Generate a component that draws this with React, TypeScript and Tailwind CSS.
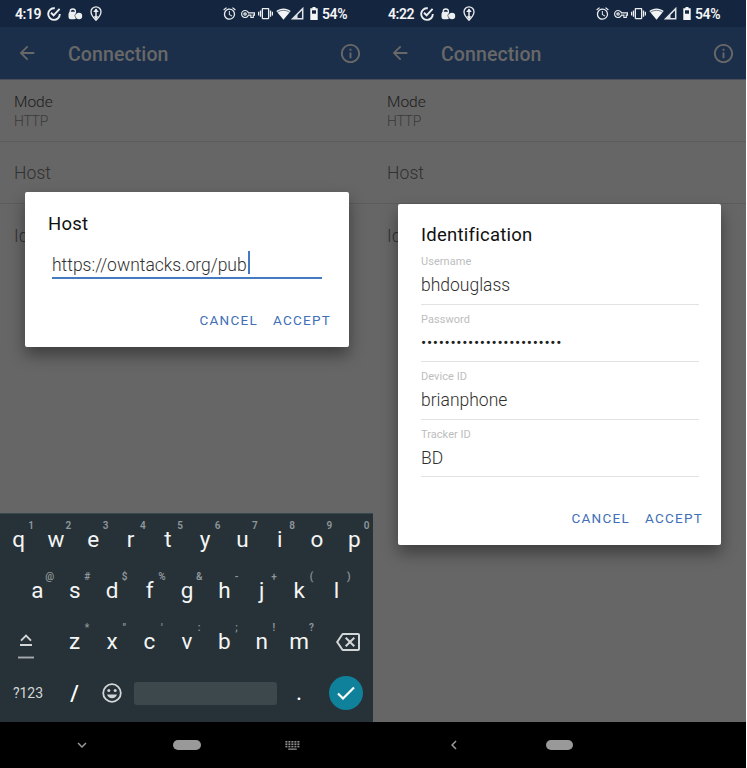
import React from "react";
import { MdArrowBack, MdAlarm, MdOutlineVpnKey, MdVibration, MdInfoOutline, MdOutlineBackspace, MdKeyboardArrowDown, MdKeyboardArrowLeft } from "react-icons/md";

function TaskIcon() {
  return (
    <svg width="14" height="14" viewBox="0 0 14 14" fill="none" stroke="#eceef0" strokeWidth="1.9">
      <path d="M7.8 1.3A5.8 5.8 0 1 0 12.8 7" />
      <path d="M4 5.800 6.600 8.300 12.600 1.800" />
    </svg>
  );
}

function LockBubblesIcon() {
  return (
    <svg width="15" height="12" viewBox="0 0 15 12">
      <path d="M2.200 5V3.600a2.600 2.600 0 0 1 5.200 0V5" fill="none" stroke="#eceef0" strokeWidth="1.300" />
      <rect x="0.500" y="3.700" width="7.800" height="7.600" rx="2.200" fill="#eceef0" />
      <circle cx="11" cy="8" r="3.200" fill="#eceef0" />
      <path d="M8.300 4.800a4 4 0 0 0-.4 5.500" fill="none" stroke="#14263f" strokeWidth="0.600" />
    </svg>
  );
}

function PinIcon() {
  return (
    <svg width="12" height="15" viewBox="0 0 12 15">
      <path d="M6 .8a5 5 0 0 0-5 5C1 9.300 6 14.300 6 14.300s5-5 5-8.500a5 5 0 0 0-5-5Z" fill="none" stroke="#eceef0" strokeWidth="1.300" />
      <path d="M6 3.200v8" fill="none" stroke="#eceef0" strokeWidth="1.500" />
      <path d="M6 2.600 8.800 6H3.200zM3.800 10.300h4.400L6 13.800z" fill="#eceef0" />
    </svg>
  );
}

function WifiIcon() {
  return (
    <svg width="15" height="12" viewBox="0 0 15 12">
      <path d="M.3 3C4.300-.5 10.700-.5 14.700 3L7.500 11.800Z" fill="#f4f5f6" />
      <path d="M1.300 4.300C5 1.700 10 1.700 13.700 4.300" fill="none" stroke="#14263f" strokeWidth="0.600" />
    </svg>
  );
}

function SignalIcon() {
  return (
    <svg width="13" height="13" viewBox="0 0 13 13">
      <path d="M1.600 11.700 11.700 1.600V11.700Z" fill="none" stroke="#e0e3e7" strokeWidth="1.500" />
      <path d="M2 11.500 6.500 7V11.500Z" fill="#e0e3e7" />
    </svg>
  );
}

function BatteryIcon() {
  return (
    <svg width="8" height="13" viewBox="0 0 8 13">
      <path d="M2.500 0h3v1.300H7.700V13H.3V1.300h2.200z" fill="#f4f5f6" />
      <path d="M2 3.300h4v3.400H2z" fill="#14263f" />
    </svg>
  );
}

function SmileyIcon() {
  return (
    <svg width="20" height="20" viewBox="0 0 20 20">
      <circle cx="10" cy="10" r="8.800" fill="none" stroke="#d3d6d7" strokeWidth="1.800" />
      <circle cx="6.800" cy="7.500" r="1.500" fill="#d3d6d7" />
      <circle cx="13.200" cy="7.500" r="1.500" fill="#d3d6d7" />
      <path d="M5 11.500h10c-.7 2.300-2.600 3.700-5 3.700s-4.300-1.400-5-3.700Z" fill="#d3d6d7" />
    </svg>
  );
}

function ShiftIcon() {
  return (
    <svg width="18" height="26" viewBox="0 0 18 26" fill="none" stroke="#d3d6d7" strokeWidth="1.900">
      <path d="m4 7.700 5-5 5 5M3 12h12" />
      <path d="M1 24.500h16" stroke="#a5abae" />
    </svg>
  );
}

function KeyboardSwitchIcon() {
  const columns = [0, 3, 6, 9, 12];
  return (
    <svg width="15" height="9" viewBox="0 0 15 9" fill="#8d8d8d">
      {[0, 2.4, 4.8].map((y) => columns.map((x) => <rect key={x + "-" + y} x={x + 0.4} y={y} width="2" height="1.6" />))}
      <rect x="3.200" y="7.500" width="8.600" height="1.300" />
    </svg>
  );
}

function StatusBar({ time }: { time: string }) {
  return (
    <div className="flex h-[27px] shrink-0 items-center bg-[#14263f] pl-[15px] text-[14px] font-semibold text-[#f4f5f6]">
      <span className="w-8 pt-px leading-[26px] tracking-[-0.4px]">{time}</span>
      <TaskIcon />
      <span className="ml-[7px]"><LockBubblesIcon /></span>
      <span className="ml-[7px]"><PinIcon /></span>
      <span className="ml-[120px] flex items-center">
        <MdAlarm size={15} color="#eceef0" />
        <MdOutlineVpnKey size={14} color="#eceef0" className="ml-[4px]" />
        <MdVibration size={15} color="#eceef0" className="ml-[3px]" />
        <span className="ml-[3px]"><WifiIcon /></span>
        <SignalIcon />
        <span className="ml-[6px]"><BatteryIcon /></span>
      </span>
      <span className="ml-[4px] pt-px leading-[26px] tracking-[-0.4px]">54%</span>
    </div>
  );
}

function Toolbar() {
  return (
    <div className="flex h-[53px] shrink-0 items-center border-b border-[#4b5058] bg-[#1b2f4a] pr-[11px] pl-[16px] text-[#686868]">
      <MdArrowBack size={22} />
      <h1 className="ml-[30px] flex-1 pt-[3px] text-[19.5px] leading-6 font-[550] tracking-[0.1px]">Connection</h1>
      <MdInfoOutline size={23} className="mt-px" />
    </div>
  );
}

function Settings() {
  return (
    <div className="flex-1 bg-[#666]">
      <div className="h-[62px] border-b border-[#5c5c5c] pt-[13px] pl-[14px]">
        <div className="text-[15.5px] leading-[19px] font-[350] text-[#1c1c1c]">Mode</div>
        <div className="text-[14px] leading-[19px] font-[350] tracking-[-0.3px] text-[#393939]">HTTP</div>
      </div>
      <div className="flex h-[62px] items-center border-b border-[#5c5c5c] pt-[2px] pl-[14px] text-[17.5px] font-[350] tracking-[0.1px] text-[#303030]">Host</div>
      <div className="flex h-[62px] items-center pt-[2px] pl-[14px] text-[17.5px] font-[350] tracking-[0.1px] text-[#303030]">Id</div>
    </div>
  );
}

function Phone({ time, keyboard, nav, children }: { time: string; keyboard?: React.ReactNode; nav: React.ReactNode; children: React.ReactNode }) {
  return (
    <section className="relative flex h-[768px] w-[373px] shrink-0 flex-col overflow-hidden">
      <StatusBar time={time} />
      <Toolbar />
      <Settings />
      {keyboard}
      {nav}
      {children}
    </section>
  );
}

function Actions() {
  return (
    <div className="flex justify-end gap-[15px] text-[13.5px] leading-[18px] tracking-[1.25px] text-[#416fb8]">
      <button>CANCEL</button>
      <button>ACCEPT</button>
    </div>
  );
}

function Key({ label, hint }: { label: string; hint: string }) {
  return (
    <div className="relative w-[37.4px] text-center text-[22.5px] leading-[51px] font-[450] text-[#f4f5f5]">
      {label}
      <span className="absolute top-[6px] left-[25px] w-3 text-center text-[10px] leading-3 font-semibold text-[#8f979b]">{hint}</span>
    </div>
  );
}

function Keys({ letters, hints }: { letters: string; hints: string }) {
  return <>{letters.split("").map((letter, i) => <Key key={letter} label={letter} hint={hints[i]} />)}</>;
}

function Keyboard() {
  return (
    <div className="h-[209px] shrink-0 border-t border-[#3b484e] bg-[#273238]">
      <div className="flex h-[51px]"><Keys letters="qwertyuiop" hints="1234567890" /></div>
      <div className="flex h-[51px] justify-center pl-px"><Keys letters="asdfghjkl" hints="@#$%&-+()" /></div>
      <div className="flex h-[51px]">
        <div className="flex w-14 justify-center pt-[17px] pr-1"><ShiftIcon /></div>
        <Keys letters="zxcvbnm" hints={"*\"':;!?"} />
        <div className="flex flex-1 items-center justify-center pl-[5px]"><MdOutlineBackspace size={24} color="#d3d6d7" /></div>
      </div>
      <div className="flex h-[51px] items-center pt-px text-[#d3d6d7]">
        <span className="w-14 text-center text-[14px] font-[450]">?123</span>
        <span className="w-[37px] text-center text-[22px] font-medium text-white">/</span>
        <span className="flex w-[38px] justify-center"><SmileyIcon /></span>
        <span className="ml-[3px] h-[23px] w-[143px] rounded-[3px] bg-[#3d484d]" />
        <span className="w-[44px] text-center text-[23px] text-white">.</span>
        <span className="ml-[8px] flex size-[34px] items-center justify-center rounded-full bg-[#10819a]">
          <svg width="18" height="14" viewBox="0 0 18 14" fill="none" stroke="white" strokeWidth="2.200"><path d="m1 7.500 5 5L17 1.500" /></svg>
        </span>
      </div>
    </div>
  );
}

const fields = [
  ["Username", "bhdouglass"],
  ["Password", "••••••••••••••••••••••••"],
  ["Device ID", "brianphone"],
  ["Tracker ID", "BD"],
];

export default function App() {
  return (
    <main className="flex h-[768px] w-[747px] overflow-hidden bg-white font-['Roboto',sans-serif]">
      <Phone
        time="4:19"
        keyboard={<Keyboard />}
        nav={
          <div className="flex h-[46px] shrink-0 items-center bg-black text-[#999]">
            <MdKeyboardArrowDown size={18} className="ml-[73px]" />
            <span className="ml-[82px] h-[10px] w-[28px] rounded-full bg-[#999]" />
            <span className="ml-[84px]"><KeyboardSwitchIcon /></span>
          </div>
        }
      >
        <div className="absolute top-[192px] left-[25px] h-[155px] w-[324px] rounded-[2px] bg-white pt-[20px] shadow-[0_8px_16px_rgba(0,0,0,0.4)]">
          <h2 className="pl-[23px] text-[18.5px] leading-[24px] tracking-[0.2px] text-[#101010]">Host</h2>
          <div className="mt-[15px] ml-[27px] flex h-[28px] w-[270px] items-start border-b-2 border-[#447abf] text-[17.5px] leading-[28px] font-[350] text-[#303030]">
            <span className="w-[196px] whitespace-nowrap">https://owntacks.org/pub</span>
            <span className="h-[23px] w-[2px] bg-[#447abf]" />
          </div>
          <div className="mt-[32px] pr-[18px]"><Actions /></div>
        </div>
      </Phone>
      <Phone
        time="4:22"
        nav={
          <div className="flex h-[46px] shrink-0 items-center bg-black text-[#999]">
            <MdKeyboardArrowLeft size={18} className="ml-[72px]" />
            <span className="ml-[83px] h-[10px] w-[27px] rounded-full bg-[#999]" />
          </div>
        }
      >
        <div className="absolute top-[204px] left-[25px] h-[341px] w-[323px] rounded-[2px] bg-white pt-[19px] shadow-[0_8px_16px_rgba(0,0,0,0.4)]">
          <h2 className="pl-[23px] text-[18.5px] leading-[24px] tracking-[0.25px] text-[#101010]">Identification</h2>
          <div className="pl-[23px]">
            {fields.map(([label, value]) => (
              <div key={label} className="h-[57.5px] w-[278px] border-b border-[#e2e2e2] pt-[8px]">
                <div className="text-[11px] leading-[14px] tracking-[0.05px] text-[#bdbdbd]">{label}</div>
                <div className={label === "Password" ? "pt-[4px] text-[15.5px] leading-[24px] tracking-[0.65px] text-[#202020]" : "pt-[5px] text-[17.5px] leading-[23px] font-[350] text-[#303030]"}>{value}</div>
              </div>
            ))}
          </div>
          <div className="mt-[32px] pr-[18px]"><Actions /></div>
        </div>
      </Phone>
    </main>
  );
}
